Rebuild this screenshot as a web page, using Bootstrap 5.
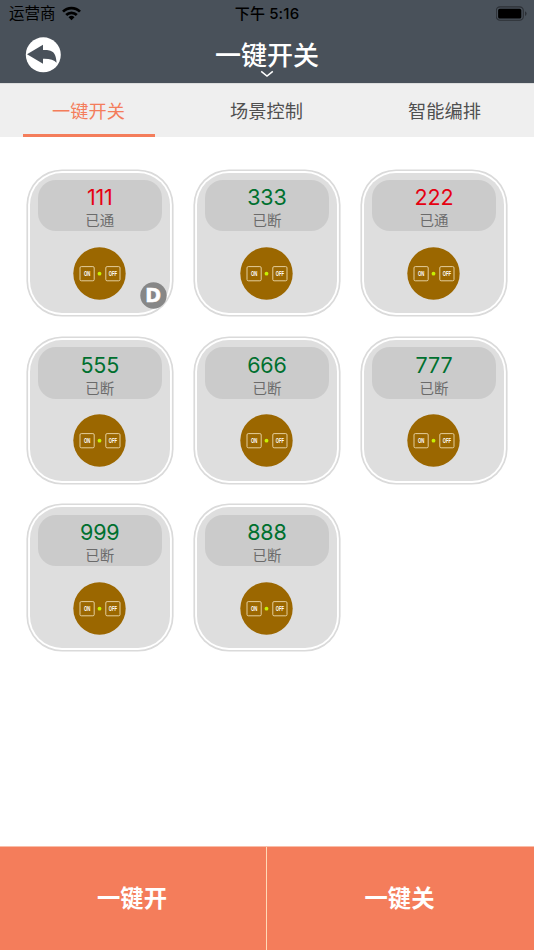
<!DOCTYPE html>
<html lang="zh-CN">
<head>
<meta charset="utf-8">
<meta name="viewport" content="width=device-width, initial-scale=1">
<title>一键开关</title>
<link href="https://cdn.jsdelivr.net/npm/bootstrap@5.3.0/dist/css/bootstrap.min.css" rel="stylesheet">
<style>
body{font-family:Inter,"Noto Sans CJK SC",sans-serif;height:950px;overflow:hidden;background:#fff}
.top-area{background:#49515a;height:83px}
.status{height:27px;color:#000;font-size:15.5px;line-height:28px}
.carrier{padding-left:9px}
.wifi{margin-left:6.5px}
.status-time{font-weight:500;font-size:15px;white-space:nowrap;letter-spacing:.15px}
.title-row{height:56px}
.title-text{font-size:26px;line-height:30px;font-weight:500;color:#fff;padding-top:14px}
.chevron{margin-top:-1px}
.back-btn{width:36px;height:36px;margin-top:10px}
.tabs{height:54px;background:#efefef;border-top:1px solid #dcdddd}
.tabs .nav-link{font-size:18.2px;line-height:50px;height:53px;color:#505050;padding:2px 0 0;width:132px;margin:auto;border-bottom:3px solid transparent;text-indent:-1px}
.tabs .nav-link.active{color:#f47d5b;border-color:#f47d5b}
.switches{display:grid;grid-template-columns:repeat(3,140.6px);gap:26.8px 26.5px;padding:35.7px 0 0 29.5px}
.switch{height:140.6px;border-radius:32px;background:#dedede;box-shadow:0 0 0 1.9px #fff,0 0 0 3.6px #dadada;padding-top:7.2px}
.plate{width:124px;height:51.5px;border-radius:18px;background:#cbcbcb}
.num{font-size:21.5px;line-height:26px;padding-top:4.5px;color:#00702f;letter-spacing:-.2px}
.num.on{color:#e60012}
.state{font-size:14.5px;line-height:17px;color:#6b6b6b;margin-top:2px}
.knob{width:53px;height:53px;margin-top:15.5px}
.timer{right:3.5px;bottom:4px;width:27px;height:27px}
.actions{height:104px;border-top:1px solid #f9bda8}
.actions .btn{background:#f47d5b;color:#fff;font-size:23.3px;font-weight:700;border-radius:0;border:0;padding:8px 2px 6px 0}
.actions .btn:first-child{border-right:1px solid #ffd9b8}
</style>
</head>
<body class="d-flex flex-column">
<svg class="d-none">
<symbol id="knob" viewBox="0 0 53 53">
<circle cx="26.5" cy="26.5" r="26.2" fill="#9b6700"/>
<g fill="none" stroke="#ecd9ad" stroke-width=".9"><rect x="7" y="19.6" width="14.2" height="14.2" rx="1.3"/><rect x="32.8" y="19.6" width="14.2" height="14.2" rx="1.3"/></g>
<circle cx="26.5" cy="26.7" r="1.9" fill="#c8f000"/>
<g fill="#fff" font-family="Liberation Sans,sans-serif" font-weight="700" font-size="10"><text transform="translate(10.9 29.4) scale(.43 .7)">ON</text><text transform="translate(35.8 29.4) scale(.41 .7)">OFF</text></g>
</symbol>
</svg>
<header class="top-area flex-shrink-0">
<div class="status d-flex justify-content-between position-relative">
<div class="carrier d-flex align-items-center"><span>运营商</span>
<svg class="wifi" width="19" height="15" viewBox="0 0 19 15"><g fill="none" stroke="#000" stroke-width="2.7"><path d="M1 5.6a12 12 0 0 1 17 0M4.2 9a7.5 7.5 0 0 1 10.6 0"/></g><path d="M6.5 11.2a4.3 4.3 0 0 1 6 0l-3 3.1z"/></svg></div>
<div class="status-time position-absolute start-50 translate-middle-x">下午 5:16</div>
<svg class="align-self-center me-1" width="34" height="16" viewBox="0 0 34 16"><rect x=".3" y=".9" width="27" height="13.4" rx="3.7" fill="none" stroke="#2c3036" stroke-width="1.1"/><rect x="2.1" y="2.8" width="23.2" height="9.8" rx="1.6"/><path d="M29 5.3q1.6.6 1.6 2.3t-1.6 2.3z" fill="#2c3036"/></svg>
</div>
<div class="title-row d-flex align-items-start">
<div class="col-3"><a href="#" aria-label="返回" class="d-inline-block ms-4"><svg class="back-btn d-block" viewBox="-1 -.5 36 36" overflow="visible"><circle cx="18.3" cy="17.3" r="17.5" fill="#fff"/><path d="M2 16.8L18 7.3V12.4C25.5 12.4 31 12.6 31.6 25.2Q28 21 18 21.3V26.2Z" fill="#49515a"/></svg></a></div>
<div class="col-6 text-center"><div class="title-text">一键开关</div><svg class="chevron d-block mx-auto" width="14" height="8" viewBox="0 0 14 8"><path d="M1.2 1.3l5.8 4.8 5.8-4.8" fill="none" stroke="#fff" stroke-width="1.5"/></svg></div>
</div>
</header>
<nav class="nav nav-fill tabs flex-shrink-0 flex-nowrap">
<div class="col-4"><a class="nav-link active text-center" href="#">一键开关</a></div>
<div class="col-4"><a class="nav-link text-center" href="#">场景控制</a></div>
<div class="col-4"><a class="nav-link text-center" href="#">智能编排</a></div>
</nav>
<main class="switches" id="switches"></main>
<footer class="actions d-flex mt-auto flex-shrink-0"><button class="btn w-50">一键开</button><button class="btn w-50">一键关</button></footer>
<script>
const items=[['111',1,1],['333',0],['222',1],['555',0],['666',0],['777',0],['999',0],['888',0]];
document.getElementById('switches').innerHTML=items.map(([n,on,d])=>`<div class="switch position-relative d-flex flex-column align-items-center"><div class="plate text-center"><div class="num ${on?'on':''}">${n}</div><div class="state">${on?'已通':'已断'}</div></div><svg class="knob"><use href="#knob"/></svg>${d?'<svg class="timer position-absolute" viewBox="0 0 27 27"><circle cx="13.5" cy="13.5" r="13.2" fill="#878787"/><text x="13.2" y="20.4" text-anchor="middle" font-family="DejaVu Sans,sans-serif" font-weight="700" font-size="19" stroke="#fff" stroke-width=".5" fill="#fff">D</text></svg>':''}</div>`).join('');
</script>
<script src="https://cdn.jsdelivr.net/npm/bootstrap@5.3.0/dist/js/bootstrap.bundle.min.js"></script>
</body>
</html>
